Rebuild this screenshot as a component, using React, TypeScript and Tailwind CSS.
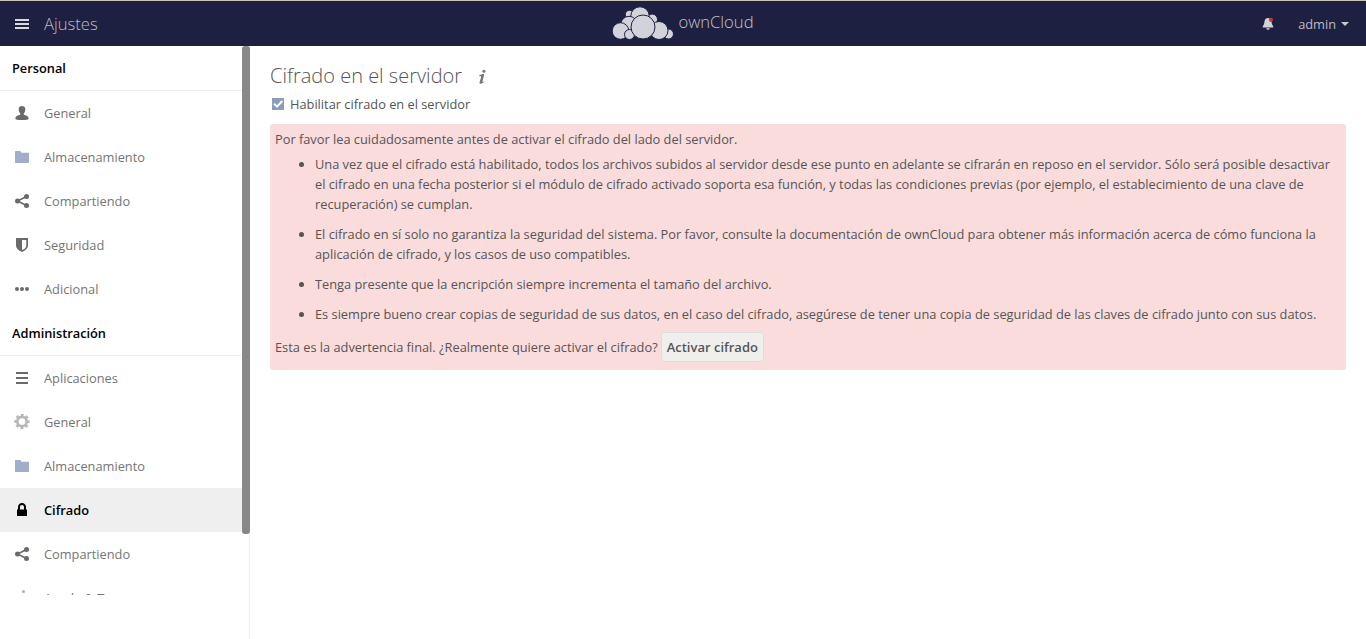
import type { ReactNode } from 'react';

type IconName = 'user' | 'folder' | 'share' | 'shield' | 'more' | 'list' | 'gear' | 'lock' | 'info';

const shapes: Record<IconName, ReactNode> = {
  user: (
    <path d="M8 1C6.100 1 4.700 2.100 4.700 4c0 1.800.5 3.300 1.400 4.200.3.500.3 1.300-.2 1.600C4.600 10.300 1.500 11.100 1.500 13v1c0 .7 2.500 1 6.500 1s6.500-.3 6.500-1v-1c0-1.900-3.100-2.700-4.400-3.200-.5-.3-.5-1.100-.2-1.600.9-.9 1.400-2.400 1.400-4.200C11.300 2.100 9.900 1 8 1z" />
  ),
  folder: <path d="M1.500 2h4.800l1.200 1.700h7c.3 0 .5.200.5.500v9.300c0 .3-.2.500-.5.500h-13c-.3 0-.5-.2-.5-.5v-11c0-.3.200-.5.500-.5z" />,
  share: (
    <>
      <circle cx="12.500" cy="3.500" r="2.500" />
      <circle cx="12.500" cy="12.500" r="2.500" />
      <circle cx="3.500" cy="8" r="2.500" />
      <path d="M12.500 3.500L3.500 8l9 4.500" fill="none" stroke="currentColor" strokeWidth="1.600" />
    </>
  ),
  shield: (
    <path
      fillRule="evenodd"
      d="M2 1h12v7.500c0 2.900-2.600 5-6 6.500-3.400-1.500-6-3.600-6-6.500zM8 3v10c2.600-1.100 4.300-2.400 4.300-4.600V3z"
    />
  ),
  more: (
    <>
      <circle cx="3" cy="8" r="2" />
      <circle cx="8" cy="8" r="2" />
      <circle cx="13" cy="8" r="2" />
    </>
  ),
  list: <path d="M2 2h12v2H2zM2 7h12v2H2zM2 12h12v2H2z" />,
  gear: (
    <>
      <circle cx="8" cy="7.500" r="4.700" fill="none" stroke="currentColor" strokeWidth="2.700" />
      <circle
        cx="8"
        cy="7.500"
        r="6.600"
        fill="none"
        stroke="currentColor"
        strokeWidth="2.200"
        strokeDasharray="2.884 2.300"
        strokeDashoffset="1.442"
      />
    </>
  ),
  lock: (
    <path
      fillRule="evenodd"
      d="M8 1C5.700 1 4 2.700 4 5v2.500H3V14h10V7.500h-1V5c0-2.300-1.700-4-4-4zm0 2c1.200 0 2 .9 2 2v2.500H6V5c0-1.100.8-2 2-2z"
    />
  ),
  info: (
    <>
      <circle cx="9.500" cy="1.500" r="1.500" />
      <path d="M6 6l4-1-2 8 2-.5-1 1.500-3 1 2-8z" />
    </>
  ),
};

function Icon({ name, className = '' }: { name: IconName; className?: string }) {
  return (
    <svg viewBox="0 0 16 16" fill="currentColor" className={`h-4 w-4 shrink-0 ${className}`}>
      {shapes[name]}
    </svg>
  );
}

type Item = { label: string; icon: IconName; tint?: string; active?: boolean };

const personal: Item[] = [
  { label: 'General', icon: 'user' },
  { label: 'Almacenamiento', icon: 'folder', tint: 'text-[#a2aec8]' },
  { label: 'Compartiendo', icon: 'share' },
  { label: 'Seguridad', icon: 'shield' },
  { label: 'Adicional', icon: 'more' },
];

const admin: Item[] = [
  { label: 'Aplicaciones', icon: 'list' },
  { label: 'General', icon: 'gear', tint: 'text-[#b7b7b7]' },
  { label: 'Almacenamiento', icon: 'folder', tint: 'text-[#a2aec8]' },
  { label: 'Cifrado', icon: 'lock', active: true },
  { label: 'Compartiendo', icon: 'share' },
  { label: 'Ayuda & Trucos', icon: 'info', tint: 'text-[#b0b0b0]' },
];

function NavGroup({ title, items }: { title: string; items: Item[] }) {
  return (
    <section>
      <h2 className="h-[45px] border-b border-[#eeeeee] pl-3 leading-[44px] font-semibold text-black">{title}</h2>
      <ul>
        {items.map((item) => (
          <li
            key={item.label}
            className={`flex h-11 items-center gap-3.5 pl-3.5 ${
              item.active ? 'bg-[#efefef] font-semibold text-black' : 'text-[#757575]'
            }`}
          >
            <Icon name={item.icon} className={item.tint ?? (item.active ? 'text-black' : 'text-[#6a6a6a]')} />
            <span>{item.label}</span>
          </li>
        ))}
      </ul>
    </section>
  );
}

function Logo() {
  return (
    <svg viewBox="0 0 62 34" className="mb-0.5 h-[34px] w-[62px]" fill="#d2d2da" stroke="#1d2040" strokeWidth="1">
      <circle cx="17.500" cy="8.500" r="4.200" />
      <circle cx="40" cy="13.500" r="5.500" />
      <circle cx="28" cy="10" r="9.200" />
      <circle cx="17" cy="18.500" r="8.200" />
      <circle cx="8.500" cy="25" r="8.300" />
      <circle cx="17.500" cy="28.500" r="5" />
      <circle cx="56.500" cy="28" r="5" />
      <circle cx="47" cy="24.500" r="9" />
      <circle cx="31" cy="21" r="12" />
    </svg>
  );
}

function Header() {
  return (
    <header className="grid h-[46px] shrink-0 grid-cols-3 items-center border-t border-[#c9c5bb] bg-[#1d2040]">
      <div className="flex items-center pl-[15px] pt-px">
        <svg viewBox="0 0 14 10" className="h-2.5 w-3.5" fill="#d9dae0">
          <path d="M0 0h14v2H0zM0 4h14v2H0zM0 8h14v2H0z" />
        </svg>
        <span className="ml-[15px] text-[16.64px] leading-6 font-light text-[#bbbcc8]">Ajustes</span>
      </div>
      <div className="flex items-center justify-center">
        <Logo />
        <span className="ml-1 pb-1 text-[16.64px] leading-6 font-light text-[#c0c1cc]">ownCloud</span>
      </div>
      <div className="flex items-center justify-end pt-px pr-[17px]">
        <svg viewBox="0 0 12 14" className="h-3.5 w-3">
          <path
            d="M6 1C4 1 2.800 2.500 2.500 4.500 2.300 7 1.800 8 .8 9v1.500h10.400V9c-1-1-1.500-2-1.700-4.500C9.200 2.500 8 1 6 1zM4.200 11.300a1.800 1.500 0 003.600 0z"
            fill="#d2d2da"
          />
          <circle cx="9" cy="2.800" r="2.100" fill="#c03a2e" />
        </svg>
        <span className="ml-6 leading-5 text-[#bbbcc6]">admin</span>
        <svg viewBox="0 0 8 4" className="ml-[5px] h-1 w-2" fill="#c6c7d0">
          <path d="M0 0h8L4 4z" />
        </svg>
      </div>
    </header>
  );
}

const warnings = [
  'Una vez que el cifrado está habilitado, todos los archivos subidos al servidor desde ese punto en adelante se cifrarán en reposo en el servidor. Sólo será posible desactivar el cifrado en una fecha posterior si el módulo de cifrado activado soporta esa función, y todas las condiciones previas (por ejemplo, el establecimiento de una clave de recuperación) se cumplan.',
  'El cifrado en sí solo no garantiza la seguridad del sistema. Por favor, consulte la documentación de ownCloud para obtener más información acerca de cómo funciona la aplicación de cifrado, y los casos de uso compatibles.',
  'Tenga presente que la encripción siempre incrementa el tamaño del archivo.',
  'Es siempre bueno crear copias de seguridad de sus datos, en el caso del cifrado, asegúrese de tener una copia de seguridad de las claves de cifrado junto con sus datos.',
];

export default function App() {
  return (
    <div className="flex h-[639px] w-[1366px] flex-col overflow-hidden bg-white font-['Open_Sans',sans-serif] text-[12.8px] leading-5 text-[#555555]">
      <Header />
      <div className="flex min-h-0 flex-1">
        <aside className="w-[250px] shrink-0 border-r border-[#eeeeee]">
          <div className="-mr-px flex h-[549px] overflow-hidden">
            <nav className="flex-1">
              <NavGroup title="Personal" items={personal} />
              <NavGroup title="Administración" items={admin} />
            </nav>
            <div className="h-[488px] w-2 rounded-[3px] bg-[#888888]" />
          </div>
        </aside>
        <main className="flex-1 pt-4 pr-5 pl-5">
          <div className="flex items-center">
            <h1 className="text-[20px] leading-7 font-light text-[#555555]">Cifrado en el servidor</h1>
            <svg viewBox="0 0 16 16" className="mt-0.5 ml-3 h-4 w-4" fill="#777777">
              <circle cx="9.900" cy="2.300" r="1.500" />
              <path d="M5 6.600c1.500-.8 2.900-1.500 4.300-1.500.9 0 .9.700.7 1.500l-1.500 5.600c-.2.800 0 1 .9.500l.7-.4.200.5c-1.300 1.100-2.500 2-3.800 2-1 0-1.100-.8-.8-1.800l1.400-5.100c.2-.8-.3-.9-1-.6L5.300 7.200z" />
            </svg>
          </div>
          <label className="mt-1 flex items-center pl-0.5 text-[#555555]">
            <svg viewBox="0 0 12 12" className="h-3 w-3">
              <path d="M0 0h12v12H0z" fill="#8d9bbd" />
              <path d="M2 5.600l3 3L10.300 3" fill="none" stroke="#ffffff" strokeWidth="2" />
            </svg>
            <span className="ml-1.5">Habilitar cifrado en el servidor</span>
          </label>
          <div className="mt-[10px] h-[246px] rounded-[3px] bg-[#fadcdd] p-[5px]">
            <p>Por favor lea cuidadosamente antes de activar el cifrado del lado del servidor.</p>
            <ul className="mt-[5px] list-disc space-y-2.5 pl-10">
              {warnings.map((text) => (
                <li key={text}>{text}</li>
              ))}
            </ul>
            <p className="mt-2 flex items-center">
              Esta es la advertencia final. ¿Realmente quiere activar el cifrado?
              <button className="ml-[3px] h-[30px] rounded-[3px] border border-[#dddddd] bg-[#f0efee] px-[5px] text-[13px] font-semibold">
                Activar cifrado
              </button>
            </p>
          </div>
        </main>
      </div>
    </div>
  );
}
